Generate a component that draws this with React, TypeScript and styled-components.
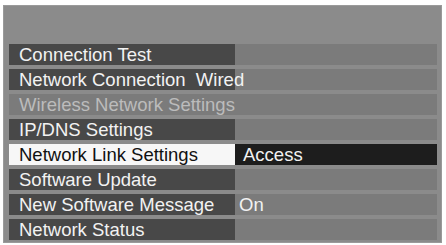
import React from "react";
import styled, { createGlobalStyle } from "styled-components";

const Global = createGlobalStyle`
  html, body { margin: 0; padding: 0; background: #ffffff; }
  body { width: 446px; height: 245px; overflow: hidden; }
`;

const Page = styled.div`
  width: 446px;
  height: 245px;
  padding: 5px 4px 2px 3px;
  box-sizing: border-box;
  background: #ffffff;
`;

const Panel = styled.div`
  width: 100%;
  height: 100%;
  box-sizing: border-box;
  background: #8b8b8b;
  border: 1px solid #9a9a9a;
  padding: 38px 4px 1px 5px;
  display: flex;
  flex-direction: column;
  gap: 4px;
`;

type Variant = "normal" | "disabled" | "selected";

const Row = styled.div`
  display: grid;
  grid-template-columns: 226px 1fr;
  height: 21px;
  font-family: "Liberation Sans", Arial, sans-serif;
  font-size: 18.5px;
  line-height: 21px;
`;

const Label = styled.div<{ $v: Variant }>`
  padding-left: 10px;
  white-space: pre;
  overflow: visible;
  position: relative;
  z-index: 1;
  background: ${(p) =>
    p.$v === "selected" ? "#f7f7f7" : p.$v === "disabled" ? "#7b7b7b" : "#484848"};
  color: ${(p) =>
    p.$v === "selected" ? "#111111" : p.$v === "disabled" ? "#bcbcbc" : "#f2f2f2"};
`;

const Value = styled.div<{ $v: Variant; $pad: number }>`
  padding-left: ${(p) => p.$pad}px;
  white-space: pre;
  background: ${(p) => (p.$v === "selected" ? "#1d1d1d" : "#7b7b7b")};
  color: #f2f2f2;
`;

const rows: { label: string; value?: string; v: Variant; pad?: number }[] = [
  { label: "Connection Test", v: "normal" },
  { label: "Network Connection  Wired", v: "normal" },
  { label: "Wireless Network Settings", v: "disabled" },
  { label: "IP/DNS Settings", v: "normal" },
  { label: "Network Link Settings", value: "Access", v: "selected", pad: 8 },
  { label: "Software Update", v: "normal" },
  { label: "New Software Message", value: "On", v: "normal", pad: 4 },
  { label: "Network Status", v: "normal" },
];

export default function App() {
  return (
    <Page>
      <Global />
      <Panel>
        {rows.map((r) => (
          <Row key={r.label}>
            <Label $v={r.v}>{r.label}</Label>
            <Value $v={r.v} $pad={r.pad ?? 6}>
              {r.value ?? ""}
            </Value>
          </Row>
        ))}
      </Panel>
    </Page>
  );
}
